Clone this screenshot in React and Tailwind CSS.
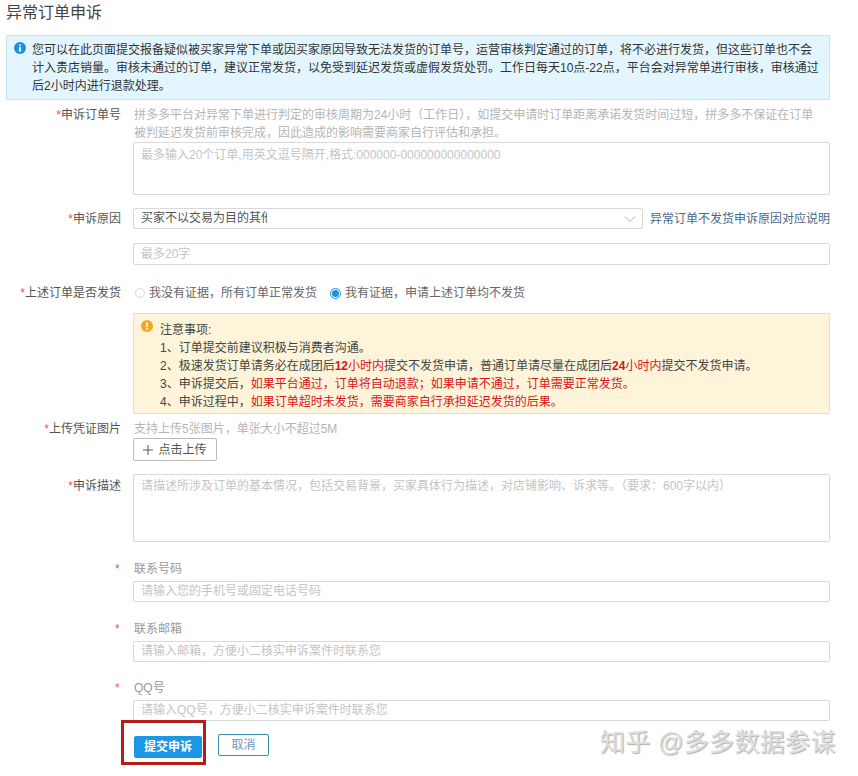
const FONT = "font-['Liberation_Sans','Noto_Sans_CJK_SC',sans-serif]"

function Label({ children }) {
  return (
    <div className="w-[115px] shrink-0 text-right text-[12px] leading-[18px] text-[#555]">
      <span className="text-[#e0555a]">*</span>
      {children}
    </div>
  )
}

function TextInput({ placeholder, className = '' }) {
  return (
    <div
      className={`h-[21px] rounded-[2px] border border-[#d9d9d9] px-[7px] text-[12px] leading-[19px] text-[#c4c4c4] ${className}`}
    >
      {placeholder}
    </div>
  )
}

function ContactField({ label, placeholder, className = '' }) {
  return (
    <div className={`flex ${className}`}>
      <div className="w-[115px] shrink-0 pl-[109px] text-[12px] leading-[18px] text-[#e0555a]">*</div>
      <div className="ml-[12px] flex-1">
        <div className="h-[18px] pl-[1px] text-[12px] leading-[18px] text-[#999]">{label}</div>
        <TextInput placeholder={placeholder} className="mt-[3px]" />
      </div>
    </div>
  )
}

function Red({ children }) {
  return <span className="text-[#d9151b]">{children}</span>
}

export default function App() {
  return (
    <div className={`${FONT} relative h-[776px] w-[858px] overflow-hidden bg-white`}>
      <div className="w-[830px] pl-[6px]">
        <h1 className="h-[35px] pt-[2px] text-[16px] leading-[22px] font-normal text-[#444]">异常订单申诉</h1>

        <div className="flex h-[65px] rounded-[1px] border border-[#bfe6f2] bg-[#e3f6ff] pt-[5px] pl-[7px] pr-[8px] text-[12px] leading-[18px] text-[#333]">
          <svg viewBox="0 0 12 12" className="mt-[1px] h-[12px] w-[12px] shrink-0">
            <circle cx="6" cy="6" r="6" fill="#1f8fe0" />
            <circle cx="6" cy="3.2" r="1" fill="#fff" />
            <rect x="5.1" y="5" width="1.8" height="4.6" fill="#fff" />
          </svg>
          <p className="ml-[6px]">
            您可以在此页面提交报备疑似被买家异常下单或因买家原因导致无法发货的订单号，运营审核判定通过的订单，将不必进行发货，但这些订单也不会计入贵店销量。审核未通过的订单，建议正常发货，以免受到延迟发货或虚假发货处罚。工作日每天10点-22点，平台会对异常单进行审核，审核通过后2小时内进行退款处理。
          </p>
        </div>

        <div className="mt-[6px] flex">
          <Label>申诉订单号</Label>
          <div className="ml-[12px] flex-1">
            <p className="pr-[11px] pl-[1px] text-[12px] leading-[18px] text-[#b5b5b5]">
              拼多多平台对异常下单进行判定的审核周期为24小时（工作日），如提交申请时订单距离承诺发货时间过短，拼多多不保证在订单被判延迟发货前审核完成，因此造成的影响需要商家自行评估和承担。
            </p>
            <div className="h-[53px] rounded-[2px] border border-[#d9d9d9] px-[7px] pt-[3px] text-[12px] leading-[18px] text-[#c4c4c4]">
              最多输入20个订单,用英文逗号隔开,格式:000000-000000000000000
            </div>
          </div>
        </div>

        <div className="mt-[13px] flex">
          <div className="pt-[2px]">
            <Label>申诉原因</Label>
          </div>
          <div className="ml-[12px] flex flex-1 items-center">
            <div className="flex h-[21px] w-[510px] items-center justify-between rounded-[2px] border border-[#d9d9d9] pr-[6px] pl-[7px]">
              <span className="w-[126px] overflow-hidden text-[12px] leading-[19px] whitespace-nowrap text-[#555]">
                买家不以交易为目的其他
              </span>
              <svg viewBox="0 0 12 12" className="h-[12px] w-[12px]" fill="none" stroke="#aaa" strokeWidth="1">
                <path d="M1 3.5 L6 8.5 L11 3.5" />
              </svg>
            </div>
            <span className="ml-[7px] text-[12px] leading-[18px] whitespace-nowrap text-[#48698c]">
              异常订单不发货申诉原因对应说明
            </span>
          </div>
        </div>

        <div className="mt-[14px] ml-[127px]">
          <TextInput placeholder="最多20字" className="h-[22px] leading-[20px]" />
        </div>

        <div className="mt-[19px] flex items-center">
          <Label>上述订单是否发货</Label>
          <div className="ml-[12px] flex items-center text-[12px] leading-[18px] text-[#666]">
            <span className="ml-[2px] h-[10px] w-[10px] rounded-full border border-[#d9d9d9]" />
            <span className="ml-[4px]">我没有证据，所有订单正常发货</span>
            <span className="ml-[13px] flex h-[11px] w-[11px] items-center justify-center rounded-full border border-[#1f8fe0]">
              <span className="h-[7px] w-[7px] rounded-full bg-[#1f8fe0]" />
            </span>
            <span className="ml-[4px]">我有证据，申请上述订单均不发货</span>
          </div>
        </div>

        <div className="mt-[11px] ml-[127px] flex h-[101px] rounded-[1px] border border-[#f0dfa8] bg-[#fdf4d9] pt-[6px] pl-[7px] text-[12px] leading-[18px] text-[#444]">
          <svg viewBox="0 0 12 12" className="h-[12px] w-[12px] shrink-0">
            <circle cx="6" cy="6" r="6" fill="#f5a623" />
            <rect x="5.2" y="2.4" width="1.6" height="4.6" fill="#fff" />
            <circle cx="6" cy="8.8" r="0.9" fill="#fff" />
          </svg>
          <div className="ml-[7px] pt-[1px]">
            <p>注意事项:</p>
            <p>1、订单提交前建议积极与消费者沟通。</p>
            <p>
              2、极速发货订单请务必在成团后<Red><b>12</b>小时内</Red>提交不发货申请，普通订单请尽量在成团后<Red><b>24</b>小时内</Red>提交不发货申请。
            </p>
            <p>
              3、申诉提交后，<Red>如果平台通过，订单将自动退款；如果申请不通过，订单需要正常发货。</Red>
            </p>
            <p>
              4、申诉过程中，<Red>如果订单超时未发货，需要商家自行承担延迟发货的后果。</Red>
            </p>
          </div>
        </div>

        <div className="mt-[6px] flex">
          <Label>上传凭证图片</Label>
          <div className="ml-[12px] flex-1">
            <p className="pl-[1px] text-[12px] leading-[18px] text-[#b5b5b5]">支持上传5张图片，单张大小不超过5M</p>
            <div className="flex h-[23px] w-[84px] items-center justify-center rounded-[2px] border border-[#bbb] text-[12px] text-[#555]">
              <svg viewBox="0 0 10 10" className="mr-[5px] h-[10px] w-[10px]" stroke="#555" strokeWidth="1">
                <path d="M5 0 V10 M0 5 H10" />
              </svg>
              点击上传
            </div>
          </div>
        </div>

        <div className="mt-[13px] flex">
          <div className="pt-[3px]">
            <Label>申诉描述</Label>
          </div>
          <div className="ml-[12px] h-[68px] flex-1 rounded-[2px] border border-[#d9d9d9] px-[7px] pt-[2px] text-[12px] leading-[18px] text-[#c4c4c4]">
            请描述所涉及订单的基本情况，包括交易背景，买家具体行为描述，对店铺影响、诉求等。（要求：600字以内）
          </div>
        </div>

        <ContactField label="联系号码" placeholder="请输入您的手机号或固定电话号码" className="mt-[18px]" />
        <ContactField label="联系邮箱" placeholder="请输入邮箱，方便小二核实申诉案件时联系您" className="mt-[18px]" />
        <ContactField label="QQ号" placeholder="请输入QQ号，方便小二核实申诉案件时联系您" className="mt-[17px]" />

        <div className="mt-[13px] ml-[128px] flex">
          <div className="relative">
            <button className="h-[22px] w-[68px] rounded-[2px] bg-[#1c97e6] text-[12px] font-bold text-white">提交申诉</button>
            <div className="absolute top-[-14px] left-[-13px] h-[45px] w-[85px] border-[3px] border-[#b51c1c]" />
          </div>
          <button className="ml-[16px] h-[22px] w-[51px] rounded-[2px] border border-[#3b92ad] bg-white text-[12px] text-[#6f93bd]">取消</button>
        </div>
      </div>

      <div className="absolute top-[726px] left-[600px] text-[25px] leading-[32px] tracking-[0.35px] whitespace-nowrap text-[#dedede] [text-shadow:1px_1px_1px_#b0b0b0]">
        知乎 @多多数据参谋
      </div>
    </div>
  )
}
